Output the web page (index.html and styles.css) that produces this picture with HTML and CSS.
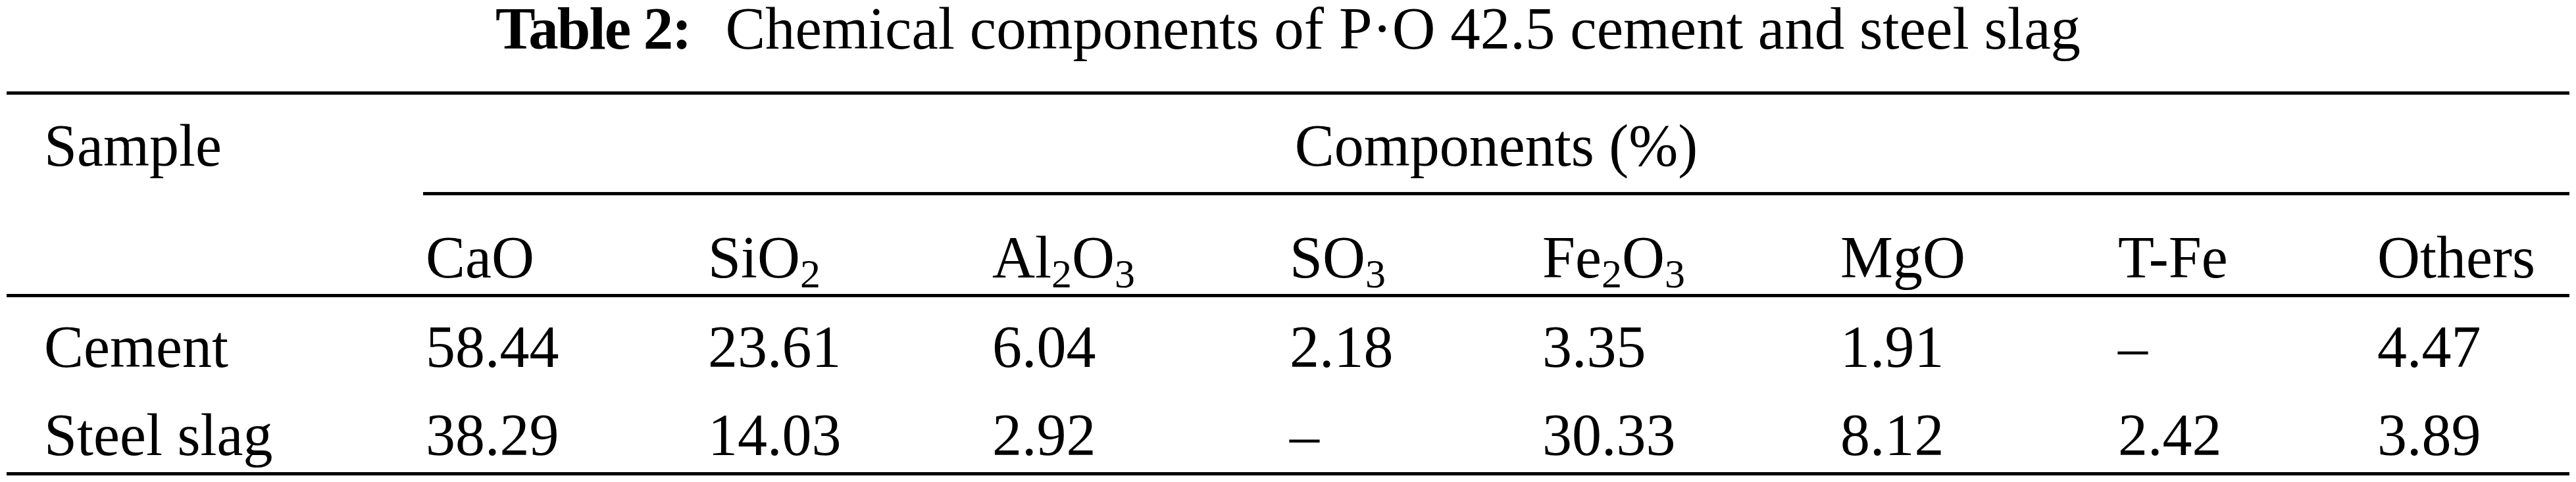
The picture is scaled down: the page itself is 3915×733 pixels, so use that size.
FILE: index.html
```html
<!DOCTYPE html>
<html lang="en">
<head>
<meta charset="UTF-8">
<title>Table 2</title>
<link rel="stylesheet" href="styles.css">
</head>
<body>

<div class="caption"><b>Table 2:</b> Chemical components of P·O 42.5 cement and steel slag</div>

<table class="data">
<colgroup>
<col style="width:633px">
<col style="width:429px">
<col style="width:432px">
<col style="width:452px">
<col style="width:384px">
<col style="width:453px">
<col style="width:422px">
<col style="width:394px">
<col style="width:296px">
</colgroup>
<tr class="head1">
<th class="name">Sample</th>
<th class="group" colspan="8">Components (%)</th>
</tr>
<tr class="head2">
<th class="name"></th>
<th>CaO</th>
<th>SiO<sub>2</sub></th>
<th>Al<sub>2</sub>O<sub>3</sub></th>
<th>SO<sub>3</sub></th>
<th>Fe<sub>2</sub>O<sub>3</sub></th>
<th>MgO</th>
<th>T-Fe</th>
<th>Others</th>
</tr>
<tr class="row first">
<td class="name">Cement</td>
<td>58.44</td>
<td>23.61</td>
<td>6.04</td>
<td>2.18</td>
<td>3.35</td>
<td>1.91</td>
<td>–</td>
<td>4.47</td>
</tr>
<tr class="row last">
<td class="name">Steel slag</td>
<td>38.29</td>
<td>14.03</td>
<td>2.92</td>
<td>–</td>
<td>30.33</td>
<td>8.12</td>
<td>2.42</td>
<td>3.89</td>
</tr>
</table>

</body>
</html>
```

FILE: styles.css
```css
body{
margin:0;
background:#fff;
color:#000;
font-family:"Liberation Serif", "Times New Roman", serif;
}

/* Caption */
.caption{
text-align:center;
font-size:91px;
line-height:88px;
margin-bottom:51px;
white-space:nowrap;
}

.caption b{
letter-spacing:-2px;
margin-right:30px;
}

/* Table */
.data{
margin-left:10px;
width:3895px;
table-layout:fixed;
border-collapse:separate;
border-spacing:0;
font-size:90px;
line-height:100px;
}

.data th,
.data td{
font-weight:normal;
text-align:left;
vertical-align:baseline;
padding:0 0 0 4px;
white-space:nowrap;
}

.data .name{
padding-left:57px;
}

.data sub{
font-size:62px;
line-height:0;
vertical-align:-15px;
}

.head1 th{
border-top:5px solid #000;
padding-top:28px;
padding-bottom:20px;
}

.head1 .group{
text-align:center;
padding-left:0;
border-bottom:5px solid #000;
}

.head2 th{
padding-top:45px;
padding-bottom:5px;
border-bottom:5px solid #000;
}

.row td{
padding-top:26px;
padding-bottom:8px;
}

.row.last td{
padding-bottom:6px;
border-bottom:5px solid #000;
}
```
